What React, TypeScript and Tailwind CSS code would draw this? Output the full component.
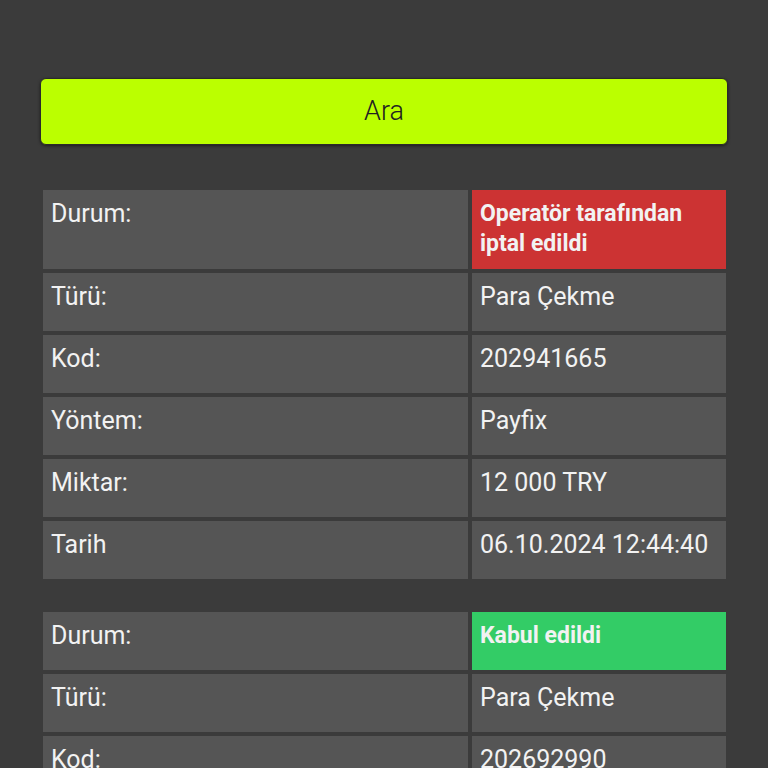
const rows1 = [
  ["Türü:", "Para Çekme"],
  ["Kod:", "202941665"],
  ["Yöntem:", "Payfix"],
  ["Miktar:", "12 000 TRY"],
  ["Tarih", "06.10.2024 12:44:40"],
];

const rows2 = [
  ["Türü:", "Para Çekme"],
  ["Kod:", "202692990"],
  ["Yöntem:", "Payfix"],
  ["Miktar:", "5 000 TRY"],
  ["Tarih", "05.10.2024 18:21:07"],
];

function Table({
  status,
  statusClass,
  rows,
}: {
  status: string;
  statusClass: string;
  rows: string[][];
}) {
  return (
    <div className="grid grid-cols-[425px_254px] gap-[4px] ml-[3px]">
      <div className="bg-[#555555] px-2 pt-[9px] min-h-[58px] text-[25px] leading-[30px]">
        Durum:
      </div>
      <div
        className={`${statusClass} px-2 pt-[9px] pb-[10px] min-h-[56px] text-[23px] leading-[30px] font-bold`}
      >
        {status}
      </div>
      {rows.map(([k, v]) => (
        <div key={k} className="contents">
          <div className="bg-[#555555] px-2 pt-[9px] h-[58px] text-[25px] leading-[30px]">
            {k}
          </div>
          <div className="bg-[#555555] px-2 pt-[9px] h-[58px] text-[25px] leading-[30px]">
            {v}
          </div>
        </div>
      ))}
    </div>
  );
}

export default function App() {
  return (
    <div
      className="min-h-screen bg-[#3b3b3b] text-[#f2f2f2] px-10 pt-[78px] pb-10"
      style={{ fontFamily: "Roboto, 'Noto Sans', sans-serif" }}
    >
      <button className="w-[688px] h-[67px] rounded-[6px] bg-[#bbff00] border border-[#2a2a2a] shadow-[0_1px_3px_rgba(0,0,0,0.5)] text-[27px] text-[#222] font-light">
        Ara
      </button>
      <div className="mt-[45px] flex flex-col gap-[33px]">
        <Table
          status="Operatör tarafından iptal edildi"
          statusClass="bg-[#cc3333]"
          rows={rows1}
        />
        <Table status="Kabul edildi" statusClass="bg-[#33cc66]" rows={rows2} />
      </div>
    </div>
  );
}
